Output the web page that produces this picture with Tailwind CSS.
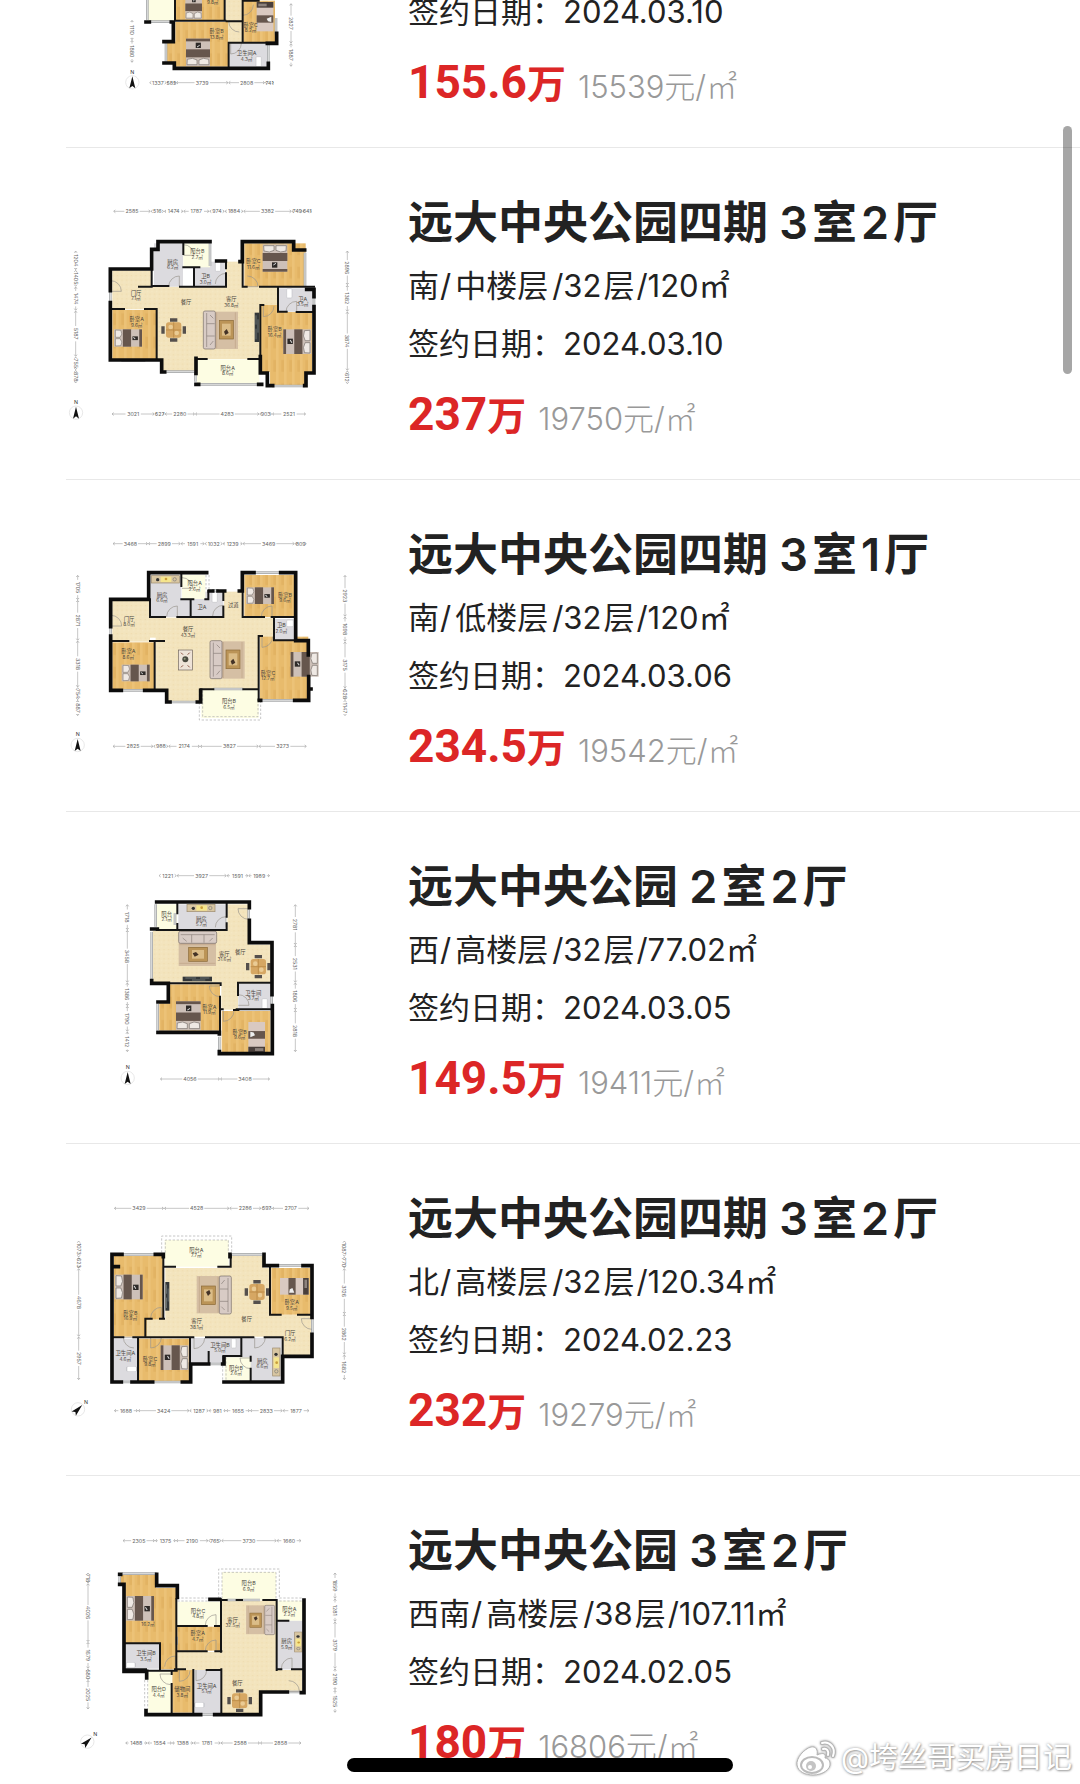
<!DOCTYPE html>
<html lang="zh-CN">
<head>
    <meta charset="UTF-8">
    <meta name="viewport" content="width=device-width, initial-scale=1.0">
    <title>远大中央公园 成交记录</title>
    <script src="https://cdn.jsdelivr.net/npm/@tailwindcss/browser@4"></script>
</head>
<body class="bg-white text-[#222] font-['Inter','Noto_Sans_CJK_SC',sans-serif]">
    <!-- Furniture and floor textures -->
    <svg class="absolute w-0 h-0" aria-hidden="true">
        <defs>
            <pattern id="wood" width="24" height="70" patternUnits="userSpaceOnUse">
                <rect width="24" height="70" fill="#e8bb6c"/>
                <rect width="8" height="70" fill="#ecc277"/>
                <rect x="16" y="20" width="8" height="35" fill="#e2b363"/>
            </pattern>
            <pattern id="tile" width="14" height="14" patternUnits="userSpaceOnUse">
                <rect width="14" height="14" fill="#f3e4bd"/>
                <rect x="2" y="3" width="4" height="3" fill="#efdcae"/>
                <rect x="9" y="9" width="3" height="3" fill="#f7ebca"/>
            </pattern>
            <g id="bed">
                <rect width="74" height="82" fill="#cdc0b8"/>
                <path d="M3 4H34V18L20 23L4 20ZM40 4H71L70 20L54 23L40 18Z" fill="#efe9e4" stroke="#77706b" stroke-width="2"/>
                <rect y="26" width="74" height="24" fill="#66564d"/>
                <rect y="74" width="74" height="8" fill="#66564d"/>
                <rect x="28" y="54" width="16" height="16" fill="#2e2a28"/>
                <path d="M32 62L40 57" stroke="#ddd" stroke-width="3"/>
            </g>
            <g id="single">
                <rect width="50" height="88" fill="#d9c9c1"/>
                <rect width="50" height="17" fill="#4a3f3b"/>
                <path d="M5 5H30V13H5Z" fill="#8d827c"/>
                <rect y="40" width="50" height="22" fill="#66564d"/>
                <path d="M30 50L44 44V60L34 58Z" fill="#eee"/>
            </g>
            <g id="sofa">
                <rect x="34" y="2" width="70" height="112" fill="#d5bfa4"/>
                <path d="M40 4V112M96 4V112" stroke="#c6ad90" stroke-width="3"/>
                <rect width="36" height="114" rx="5" fill="#d8cbc5" stroke="#746a66" stroke-width="2"/>
                <path d="M10 6V108M10 38H34M10 75H34M20 12L30 22M20 102L30 90" stroke="#8a7e79" stroke-width="2"/>
                <rect x="48" y="28" width="42" height="56" fill="#bb9457" stroke="#8b6a38" stroke-width="2"/>
                <rect x="56" y="38" width="26" height="36" fill="#dbbd88"/>
                <path d="M62 62L70 54L76 66L66 72Z" fill="#443327"/>
            </g>
            <g id="dining">
                <path d="M26 0H48V10H26ZM26 60H48V70H26ZM0 24H10V46H0ZM64 24H74V46H64Z" fill="#55504d"/>
                <rect x="14" y="12" width="46" height="46" rx="8" fill="#d6a763"/>
                <circle cx="28" cy="26" r="7" fill="#eacb94"/>
                <circle cx="46" cy="44" r="7" fill="#eacb94"/>
                <path d="M37 12V58M14 35H60" stroke="#b3843f" stroke-width="2"/>
            </g>
            <g id="tea">
                <rect width="42" height="60" fill="#eee3d8" stroke="#6d625a" stroke-width="2"/>
                <path d="M8 8L14 14M34 8L28 14M8 52L14 46M34 52L28 46" stroke="#8a5040" stroke-width="3"/>
                <circle cx="21" cy="28" r="9" fill="#4b4a40"/>
                <circle cx="19" cy="26" r="3" fill="#98a083"/>
            </g>
            <g id="tv">
                <rect width="14" height="88" fill="#34383a"/>
                <path d="M4 8V36M4 48V80M10 20V60" stroke="#899090" stroke-width="2"/>
            </g>
            <g id="stove">
                <rect width="84" height="22" fill="#d8c6a2" stroke="#9b8a6d" stroke-width="2"/>
                <rect x="28" y="3" width="32" height="16" fill="#f5e58d"/>
                <circle cx="19" cy="12" r="5" fill="#333"/>
                <circle cx="44" cy="10" r="4" fill="#c99d3a"/>
                <circle cx="70" cy="11" r="5" fill="none" stroke="#777" stroke-width="2"/>
            </g>
            <g id="toilet"><rect width="16" height="30" rx="3" fill="#fff" stroke="#c4c4c8" stroke-width="2"/></g>
            <g id="door"><path d="M0 0V32A32 32 0 0 0 32 0" fill="none" stroke="#98948c" stroke-width="2"/></g>
            <g id="compass">
                <circle r="20" fill="#fff" stroke="#ddd" stroke-width="2"/>
                <path d="M0 -18L9 18L0 11L-9 18Z" fill="#111"/>
            </g>
        </defs>
    </svg>

    <main class="relative h-screen overflow-hidden">
        <ul id="lista"></ul>

        <!-- Scroll indicator -->
        <div class="absolute right-2 top-[126px] w-[9px] h-[248px] rounded-full bg-black/35"></div>
        <!-- Home indicator -->
        <div class="absolute bottom-3 left-1/2 -translate-x-1/2 w-[386px] h-[14px] rounded-full bg-black"></div>

        <!-- Watermark -->
        <div class="absolute right-2 bottom-2 flex items-center gap-1 text-[29px] leading-[34px] text-white [text-shadow:0_0_3px_#999,1px_1px_2px_#aaa]">
            <svg class="w-[42px] h-[36px] drop-shadow-[0_0_1px_#999]" viewBox="0 0 42 36" aria-hidden="true">
                <path d="M16 7C9 9 1 18 2 25C3 32 11 35 18 35C28 35 36 29 35 23C35 20 32 18 30 18C31 14 29 12 22 15C23 10 21 6 16 7Z" fill="#fff" stroke="#b5b5b5"/>
                <ellipse cx="17" cy="25" rx="11" ry="8" fill="#fff" stroke="#bbb" stroke-width="2"/>
                <circle cx="16" cy="26" r="5" fill="#c4c4c4"/>
                <circle cx="15" cy="27" r="2" fill="#fff"/>
                <path d="M27 3C35 1 41 8 38 16M28 9C32 8 34 11 33 15" fill="none" stroke="#b5b5b5" stroke-width="4" stroke-linecap="round"/>
                <path d="M27 3C35 1 41 8 38 16M28 9C32 8 34 11 33 15" fill="none" stroke="#fff" stroke-width="2" stroke-linecap="round"/>
            </svg>
            <span>@垮丝哥买房日记</span>
        </div>
    </main>

    <script>
        const cores = { wood: "url(#wood)", tile: "url(#tile)", gray: "#dcdbdf", balcony: "#fdfde3" };

        // top offset is where the plan starts inside the row
        const plantas = [
            {
                top: 555, north: [217, 247, 0],
                rooms: [["balcony", 262, -60, 82, 125], ["wood", 346, -60, 148, 122], ["tile", 497, -60, 50, 125], ["wood", 550, 2, 95, 124], ["wood", 346, 66, 158, 134], ["wood", 318, 125, 30, 66], ["tile", 504, 64, 44, 64], ["gray", 510, 130, 115, 72]],
                windows: "M262 -60V60M318 128V186M648 54V105M625 130V190M268 65H338",
                thick: "M258 66H268M334 66H340V120M312 125H340V118M312 189H343V205H625V190M650 100V130H622",
                thin: "M345 -60V62H496M494 -60V62M548 -60V128M548 2H596M500 64H548M506 128H625M506 128V200M548 128H650",
                doors: [[548, 14, 0], [538, 64, 90], [512, 130, 0]],
                items: [["bed", 376, -20, 50, 78, 180], ["bed", 378, 116, 72, 82, 180], ["single", 590, 6, 50, 88, 0], ["toilet", 588, 170, 16, 30, 0]],
                labels: [[458, -3, "", "9.8㎡"], [470, 100, "卧室B", "13.8㎡"], [572, 80, "卧室C", "8.2㎡"], [560, 166, "卫生间A", "4.3㎡"]],
                h: [[248, [268, 320, 348, 505, 615, 642], ["1337", "585", "3739", "2808", "741"]]],
                v: [[216, [60, 120, 188], ["1110", "1880"]], [693, [10, 130, 200], ["2827", "1887"]]]
            },
            {
                top: 129, north: [48, 668, 0],
                rooms: [["tile", 157, 242, 118, 50], ["tile", 157, 290, 445, 68], ["tile", 290, 340, 312, 167], ["tile", 308, 500, 102, 44], ["tile", 498, 215, 50, 80], ["tile", 600, 290, 54, 55], ["wood", 553, 160, 184, 130], ["wood", 157, 360, 132, 148], ["wood", 603, 345, 50, 30], ["wood", 603, 366, 153, 180], ["wood", 630, 540, 108, 46], ["gray", 282, 160, 87, 130], ["gray", 402, 215, 95, 75], ["gray", 655, 295, 105, 70], ["balcony", 370, 160, 80, 72], ["balcony", 411, 508, 187, 76]],
                windows: "M735 188V288M450 160V228M184 511H256M312 545H402M412 583H595M636 588H735M406 545V575M762 318V350M151 300V340",
                thick: "M151 302V237H275V178H294V155H450M470 213H496M540 215H547V155H701V180H734M151 338V358M151 355V510H305V546H314M408 505V550M408 583H416M596 583H605M601 500V549H622V587H638M734 587H738V549H762V350M762 320V298H740",
                thin: "M275 240V288H325M360 290H498V250M370 160V192M370 232H418M402 232V288M548 215V290H560M600 290H762M654 292V365H680M710 366H756M601 345H610M601 345V505M157 357H192M255 357H290V508M408 507H440M565 507H600M498 215V235M237 290H275",
                doors: [[152, 304, 270], [358, 290, 180], [370, 196, 270], [498, 282, 180], [562, 290, 270], [610, 348, 0], [710, 366, 180]],
                items: [["bed", 608, 163, 74, 82, 0], ["bed", 670, 418, 74, 82, 90], ["bed", 162, 418, 52, 84, 270], ["sofa", 430, 363, 104, 114, 0], ["dining", 304, 385, 74, 70, 0], ["tv", 584, 368, 14, 88, 0], ["toilet", 466, 214, 16, 30, 0], ["toilet", 680, 296, 16, 28, 0]],
                labels: [[338, 221, "厨房", "6.2㎡"], [412, 190, "阳台B", "2.7㎡"], [437, 265, "卫B", "3.0㎡"], [580, 220, "卧室C", "11.6㎡"], [228, 314, "门厅", "7.1㎡"], [378, 342, "餐厅", ""], [514, 334, "客厅", "36.8㎡"], [230, 394, "卧室A", "9.6㎡"], [644, 424, "卧室B", "16.4㎡"], [728, 332, "卫A", "3.5㎡"], [503, 540, "阳台A", "8.6㎡"]],
                h: [[64, [160, 272, 312, 370, 448, 494, 550, 695, 728, 755], ["2585", "516", "1474", "1787", "974", "1884", "3382", "749", "641"]], [672, [155, 284, 314, 405, 598, 636, 738], ["3021", "527", "2280", "4283", "903", "2521"]]],
                v: [[47, [182, 240, 290, 362, 500, 540, 580], ["1204", "1405", "1474", "5187", "755", "878"]], [862, [182, 285, 365, 542, 582], ["2896", "1382", "3874", "612"]]]
            },
            {
                top: 123, north: [53, 675, 0],
                rooms: [["tile", 157, 243, 113, 122], ["tile", 270, 293, 376, 60], ["tile", 287, 350, 310, 158], ["tile", 322, 500, 98, 44], ["tile", 492, 215, 56, 82], ["wood", 553, 165, 150, 126], ["wood", 157, 367, 125, 142], ["wood", 600, 350, 145, 190], ["gray", 272, 165, 92, 126], ["gray", 362, 240, 30, 50], ["gray", 394, 215, 96, 74], ["gray", 645, 297, 58, 64], ["balcony", 366, 165, 70, 72], ["balcony", 424, 510, 172, 84]],
                windows: "M582 158H665M182 511H256M328 546H412M604 541H704M152 318V348M456 211H476M460 507H550",
                thick: "M152 320V238H266V158H440M448 213H458M474 213H494M538 213H547V158H582M662 158H707V362H745V405M152 348V511H184M254 511H320V546H330M412 546H422V511M746 470V541H704M750 507H753M598 541H602",
                thin: "M270 238V291H315M352 291H490V260M364 165V198M364 238H400M392 238V290M436 238H445V213M548 213V291H612M635 291H703M642 293V361H703M596 348H606M596 348V541M157 363H205M270 363H312M284 363V510M422 508H460M550 508H596M490 215V240",
                doors: [[153, 318, 270], [352, 290, 180], [366, 205, 270], [490, 288, 180], [636, 290, 180], [606, 350, 0]],
                dashed: "M418 511V600H602V545M428 511V590H594V545M438 165V210M447 165V210",
                items: [["bed", 558, 202, 50, 84, 270], ["bed", 185, 434, 50, 88, 270], ["bed", 692, 396, 74, 84, 90], ["sofa", 450, 362, 104, 114, 0], ["tea", 355, 390, 42, 60, 0], ["stove", 274, 167, 84, 22, 0], ["toilet", 456, 217, 16, 30, 0], ["toilet", 680, 300, 20, 20, 0]],
                labels: [[306, 231, "厨房", "6.6㎡"], [404, 196, "阳台A", "2.6㎡"], [426, 268, "卫A", ""], [520, 262, "过道", ""], [675, 230, "卧室B", "9.6㎡"], [207, 302, "门厅", "8.0㎡"], [384, 334, "餐厅", "43.3㎡"], [205, 400, "卧室A", "8.6㎡"], [624, 464, "卧室C", "12.7㎡"], [664, 322, "卫B", "2.0㎡"], [507, 550, "阳台B", "6.5㎡"]],
                h: [[71, [158, 264, 362, 434, 488, 548, 704, 740], ["3468", "2899", "1591", "1032", "1239", "3469", "809"]], [679, [158, 280, 325, 420, 596, 740], ["2825", "988", "2174", "3827", "3273"]]],
                v: [[53, [165, 240, 362, 502, 540, 588], ["1705", "2871", "3318", "754", "887"]], [855, [165, 290, 365, 505, 540, 588], ["2923", "1698", "3175", "628", "1147"]]]
            },
            {
                top: 117, north: [203, 684, 0],
                rooms: [["balcony", 291, 163, 60, 76], ["gray", 355, 163, 143, 74], ["tile", 502, 163, 64, 125], ["tile", 278, 243, 290, 154], ["tile", 560, 284, 72, 114], ["tile", 484, 395, 50, 84], ["wood", 330, 403, 150, 60], ["wood", 298, 460, 182, 82], ["wood", 485, 483, 146, 124], ["gray", 535, 402, 98, 74]],
                windows: "M275 246V386M293 462V540M478 560V600M635 434V462M287 163V230M566 178V206M345 190V225",
                thick: "M290 156H568V173M568 211V278H636V434M275 237H292M275 392V400H325V456H294M294 547H478V552M478 605V611H637V467",
                thin: "M352 160V190M352 222V240M290 240H500V220M500 160V200M330 400H482V405M480 440V478H488M480 478V545M522 480H535M534 398H636M534 398V435M530 478H635",
                doors: [[566, 176, 90], [498, 232, 180], [480, 408, 90], [490, 482, 0], [535, 466, 270]],
                items: [["bed", 348, 454, 74, 86, 180], ["single", 565, 516, 50, 92, 180], ["sofa", 356, 244, 104, 114, 90], ["dining", 558, 315, 74, 70, 0], ["tv", 368, 380, 14, 88, 90], ["stove", 381, 163, 84, 22, 0], ["toilet", 606, 446, 16, 30, 0]],
                labels: [[320, 198, "阳台", "2.1㎡"], [424, 212, "厨房", "5.7㎡"], [493, 318, "客厅", "31.6㎡"], [541, 312, "餐厅", ""], [580, 434, "卫生间", "3.7㎡"], [448, 476, "卧室A", "11.9㎡"], [539, 552, "卧室B", "9.6㎡"]],
                h: [[77, [296, 350, 500, 565, 630], ["1221", "3927", "1591", "1989"]], [687, [300, 480, 630], ["4056", "3408"]]],
                v: [[202, [163, 240, 398, 468, 545, 606], ["1718", "3458", "1386", "1790", "1412"]], [706, [163, 285, 398, 480, 606], ["2781", "2531", "1806", "2818"]]]
            },
            {
                top: 141, north: [54, 658, 45],
                rooms: [["balcony", 314, 150, 192, 80], ["wood", 162, 198, 150, 242], ["wood", 237, 446, 150, 130], ["tile", 316, 234, 314, 206], ["tile", 512, 198, 98, 40], ["tile", 260, 388, 130, 54], ["tile", 610, 374, 145, 66], ["tile", 668, 435, 88, 60], ["wood", 634, 234, 118, 140], ["gray", 162, 446, 70, 128], ["gray", 393, 444, 150, 76], ["gray", 546, 444, 118, 128], ["balcony", 494, 502, 78, 70]],
                windows: "M190 193H282M516 193H606M655 226H725M280 576H362M184 576H214M757 386V428M452 522H484",
                thick: "M186 193H156V576H184M216 576H278M367 576H392V522H446M286 193H310V200M510 200V193M612 193V227H652M729 227H756V382M756 433V499H668V576H492M162 230H175M488 522H492V504",
                thin: "M310 198V386M316 230H345M475 230H512V196M630 230V374H662M714 374H756M256 440V386H275M300 386H312M162 442H190M220 442H400M438 442H580M614 442H668V499M234 442V574M390 442V520M446 486V520M544 442V498H490M572 500V512M572 536V574",
                doors: [[304, 384, 180], [222, 442, 90], [272, 442, 0], [402, 444, 0], [584, 442, 0], [756, 386, 90], [572, 504, 90]],
                dashed: "M305 188V138H515V188M316 188V150H505V188M488 502V570M498 502V570",
                items: [["bed", 164, 254, 74, 82, 270], ["bed", 302, 466, 74, 82, 90], ["single", 660, 264, 50, 86, 90], ["sofa", 410, 258, 104, 114, 180], ["dining", 554, 270, 74, 72, 0], ["tv", 316, 276, 12, 86, 0], ["stove", 638, 474, 84, 22, 90], ["toilet", 514, 446, 14, 28, 0], ["toilet", 200, 530, 30, 14, 0]],
                labels: [[409, 186, "阳台A", "7.7㎡"], [211, 374, "卧室B", "16.9㎡"], [410, 400, "客厅", "38.1㎡"], [560, 392, "餐厅", ""], [695, 343, "卧室A", "9.5㎡"], [690, 436, "门厅", "6.2㎡"], [196, 496, "卫生间A", "4.6㎡"], [270, 512, "卧室C", "9.8㎡"], [480, 470, "卫生间B", "5.0㎡"], [528, 540, "阳台B", "2.6㎡"], [607, 518, "厨房", "6.6㎡"]],
                h: [[55, [162, 312, 508, 604, 636, 748], ["3429", "4528", "2286", "597", "2707"]], [662, [162, 234, 388, 446, 498, 570, 668, 748], ["1688", "3424", "1287", "981", "1655", "2833", "1877"]]],
                v: [[56, [152, 202, 235, 440, 570], ["1073", "623", "4678", "2957"]], [853, [152, 200, 235, 372, 494, 570], ["1087", "770", "3126", "2862", "1682"]]]
            },
            {
                top: 135, north: [82, 665, 45],
                rooms: [["wood", 196, 163, 92, 210], ["wood", 182, 163, 20, 28], ["wood", 285, 204, 64, 170], ["wood", 300, 370, 48, 78], ["gray", 197, 372, 102, 74], ["balcony", 352, 245, 130, 72], ["wood", 352, 320, 130, 72], ["tile", 350, 396, 136, 54], ["tile", 485, 242, 164, 274], ["tile", 485, 510, 114, 70], ["tile", 640, 450, 86, 62], ["gray", 652, 302, 76, 146], ["balcony", 652, 242, 76, 60], ["balcony", 486, 156, 162, 84], ["balcony", 265, 454, 70, 124], ["wood", 337, 450, 63, 128], ["gray", 403, 450, 80, 130]],
                windows: "M186 161H290M179 170V190M426 584H460M686 516H720M500 240H600M350 350V374",
                thick: "M179 163H182M179 193H192V454H260V474M290 163V197H352V232M450 238H478M732 240V518H724M682 516H602V584H464M422 584H258V572",
                thin: "M197 370H300V448M197 448H258M345 448H375M349 238V400M349 404V450M350 318H440M465 318H482M483 238V395M350 394H440M466 394H484M484 448V580M260 452H350M440 450H484M400 450V580M335 452V462M335 492V580M484 240H500M530 240H546M610 240H650V450M650 302H685M650 448H664M696 448H726",
                doors: [[468, 316, 180], [468, 392, 180], [346, 440, 180], [332, 462, 90], [358, 452, 0], [408, 450, 0], [696, 446, 180], [686, 514, 270]],
                dashed: "M476 236V147H658V236M486 236V157H648V236M352 234H446M352 243H446M658 234H726M658 243H726M254 480V566M263 480V566",
                items: [["bed", 198, 228, 74, 84, 270], ["sofa", 558, 256, 86, 88, 180], ["dining", 502, 508, 74, 68, 0], ["stove", 704, 336, 60, 22, 90], ["toilet", 198, 428, 28, 14, 0], ["toilet", 404, 548, 28, 14, 0]],
                labels: [[264, 302, "", "16.2㎡"], [258, 406, "卫生间B", "3.5㎡"], [414, 278, "阳台C", "4.8㎡"], [413, 346, "卧室A", "4.7㎡"], [566, 196, "阳台B", "6.9㎡"], [518, 306, "客厅", "32.5㎡"], [688, 272, "阳台A", "2.2㎡"], [680, 370, "厨房", "5.9㎡"], [296, 514, "阳台D", "4.4㎡"], [367, 514, "储物间", "3.8㎡"], [440, 504, "卫生间A", "5.1㎡"], [532, 494, "餐厅", ""]],
                h: [[62, [188, 285, 348, 445, 484, 650, 724], ["2305", "1375", "2190", "765", "3730", "1660"]], [669, [196, 262, 336, 400, 482, 600, 724], ["1488", "1554", "1388", "1781", "2588", "2858"]]],
                v: [[84, [158, 190, 366, 446, 480, 568], ["718", "4026", "1679", "580", "2025"]], [825, [158, 236, 305, 446, 510, 578], ["1859", "1281", "3179", "2190", "1525"]]]
            }
        ];

        const imoveis = [
            { data: "2024.03.10", preco: "155.6", unidade: "15539" },
            { nome: "远大中央公园四期", quartos: 3, salas: 2, lado: "南", nivel: "中楼层", andares: 32, area: "120", data: "2024.03.10", preco: "237", unidade: "19750" },
            { nome: "远大中央公园四期", quartos: 3, salas: 1, lado: "南", nivel: "低楼层", andares: 32, area: "120", data: "2024.03.06", preco: "234.5", unidade: "19542" },
            { nome: "远大中央公园", quartos: 2, salas: 2, lado: "西", nivel: "高楼层", andares: 32, area: "77.02", data: "2024.03.05", preco: "149.5", unidade: "19411" },
            { nome: "远大中央公园四期", quartos: 3, salas: 2, lado: "北", nivel: "高楼层", andares: 32, area: "120.34", data: "2024.02.23", preco: "232", unidade: "19279" },
            { nome: "远大中央公园", quartos: 3, salas: 2, lado: "西南", nivel: "高楼层", andares: 38, area: "107.11", data: "2024.02.05", preco: "180", unidade: "16806" },
        ];

        // Dimension line with its ticks and number, drawn along x and rotated for the sides
        function medida(a, b, texto) {
            const meio = (a + b) / 2;
            const folga = texto.length * 5 + 3;
            let linha = "";
            if (b - a > folga * 2 + 8) {
                linha = `<path d="M${a + 3} 0H${meio - folga}M${meio + folga} 0H${b - 3}" stroke="#aaa" stroke-width="2"/>`;
            }
            return `${linha}<path d="M${a + 6} -4L${a + 1} 0L${a + 6} 4M${b - 6} -4L${b - 1} 0L${b - 6} 4" fill="none" stroke="#999" stroke-width="2"/>
                <text x="${meio}" y="6" text-anchor="middle" font-size="16" fill="#666">${texto}</text>`;
        }

        function movel([id, x, y, w, h, giro]) {
            const base = { bed: [74, 82], single: [50, 88], sofa: [104, 114], dining: [74, 70], tea: [42, 60], tv: [14, 88], stove: [84, 22], toilet: [16, 30] }[id];
            const deitado = giro === 90 || giro === 270;
            // quarter turns swap the box sides
            const bw = deitado ? base[1] : base[0];
            const bh = deitado ? base[0] : base[1];
            // on the stove and tv the size is given before the turn
            const troca = deitado && ["sofa", "stove", "tv", "single"].includes(id);
            const lw = troca ? h : w;
            const lh = troca ? w : h;
            const sx = id === "bed" && deitado ? 84 / bw : lw / bw;
            const sy = id === "bed" && deitado ? w / bh : lh / bh;
            return `<g transform="translate(${x} ${y}) scale(${sx} ${sy}) translate(${bw / 2} ${bh / 2}) rotate(${giro}) translate(${-base[0] / 2} ${-base[1] / 2})"><use href="#${id}"/></g>`;
        }

        function desenharPlanta(p) {
            const [nx, ny, giro] = p.north;
            return `
                <svg class="w-[304px] h-[332px] shrink-0" viewBox="18 ${-p.top} 912 996" role="img" aria-label="户型图">
                    ${p.rooms.map(([t, x, y, w, h]) => `<rect x="${x}" y="${y}" width="${w}" height="${h}" fill="${cores[t]}"/>`).join("")}
                    <path d="${p.windows}" fill="none" stroke="#a9abac" stroke-width="8"/>
                    <path d="${p.windows}" fill="none" stroke="#dfe0e0" stroke-width="3"/>
                    ${p.dashed ? `<path d="${p.dashed}" fill="none" stroke="#aaa" stroke-width="2" stroke-dasharray="7 5"/>` : ""}
                    ${p.items.map(movel).join("")}
                    ${p.doors.map(([x, y, r]) => `<use href="#door" transform="translate(${x} ${y}) rotate(${r})"/>`).join("")}
                    <path d="${p.thin}" fill="none" stroke="#151515" stroke-width="6" stroke-linecap="square"/>
                    <path d="${p.thick}" fill="none" stroke="#0c0c0c" stroke-width="11" stroke-linecap="square"/>
                    ${p.labels.map(([x, y, a, b]) => `<text x="${x}" y="${y}" text-anchor="middle" font-size="16" fill="#4a453c">${a}<tspan x="${x}" dy="16" font-size="14">${b}</tspan></text>`).join("")}
                    ${p.h.map(([y, xs, ts]) => `<g transform="translate(0 ${y})">${ts.map((t, i) => medida(xs[i], xs[i + 1], t)).join("")}</g>`).join("")}
                    ${p.v.map(([x, ys, ts]) => `<g transform="translate(${x} 0) rotate(90)">${ts.map((t, i) => medida(ys[i], ys[i + 1], t)).join("")}</g>`).join("")}
                    <use href="#compass" transform="translate(${nx} ${ny}) rotate(${giro})"/>
                    <text x="${giro ? nx + 24 : nx}" y="${giro ? ny - 16 : ny - 26}" text-anchor="middle" font-size="16" fill="#333">N</text>
                </svg>`;
        }

        document.getElementById("lista").innerHTML = imoveis.map((im, i) => `
            <li class="ml-[66px] flex items-end gap-[38px] border-b border-[#e8e8e8] overflow-hidden ${im.nome ? "h-[332px]" : "h-[148px]"}">
                ${desenharPlanta(plantas[i])}
                <div class="pb-[30px] whitespace-nowrap">
                    ${im.nome ? `
                    <h2 class="text-[45px] leading-[54px] font-semibold">${im.nome} ${im.quartos}<span class="mx-1">室</span>${im.salas}<span class="ml-1">厅</span></h2>
                    <p class="mt-[7px] text-[31px] leading-[58px]">${im.lado}<span class="ml-px mr-1">/</span>${im.nivel}<span class="ml-1 mr-0.5">/${im.andares}</span>层<span class="ml-0.5">/${im.area}㎡</span></p>` : ""}
                    <p class="text-[31px] leading-[58px]">签约日期：${im.data}</p>
                    <p class="mt-[11px] flex items-baseline gap-3 leading-[60px]">
                        <strong class="text-[46px] font-bold text-[#dc2626] font-['Roboto','Noto_Sans_CJK_SC',sans-serif]">${im.preco}<span class="text-[39px]">万</span></strong>
                        <span class="text-[31px] font-light text-[#999]">${im.unidade}元/㎡</span>
                    </p>
                </div>
            </li>`).join("");
    </script>
</body>
</html>
